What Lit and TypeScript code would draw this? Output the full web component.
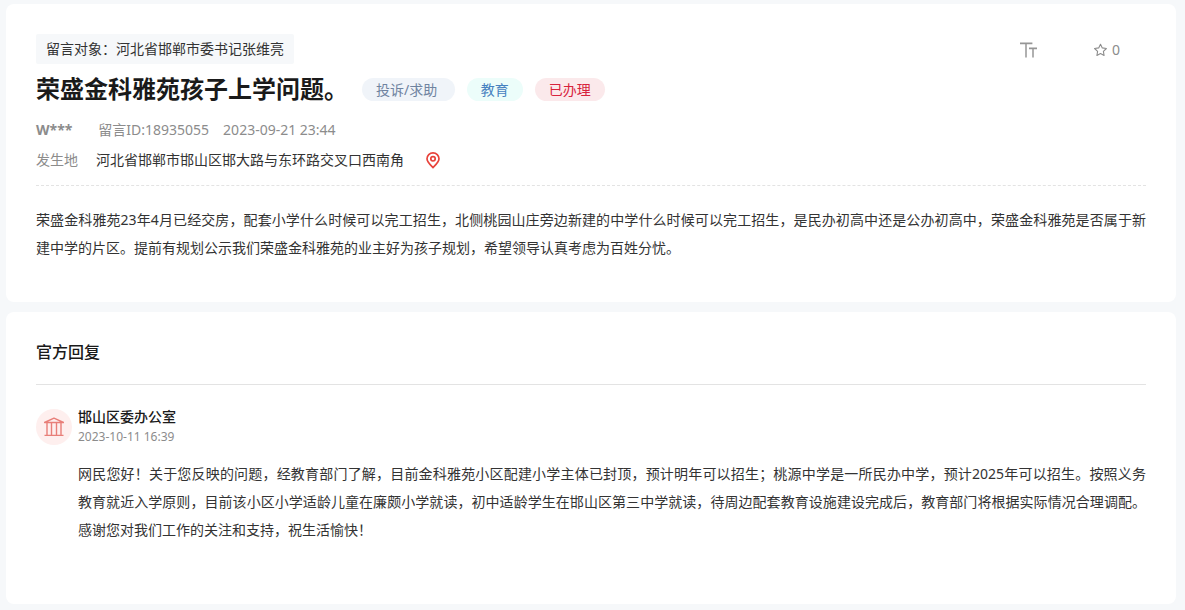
import { LitElement, html, css, svg } from "lit";
import { customElement } from "lit/decorators.js";

const textSizeIcon = svg`<svg width="18" height="16" viewBox="0 0 18 16" aria-hidden="true" fill="none" stroke="#969696">
  <path stroke-width="1.8" d="M0 1.4H12.4M9 6.4H17" />
  <path stroke-width="1.5" d="M6 1.4V15.5M13 6.4V15.5" /></svg>`;

const starIcon = svg`<svg width="14" height="14" viewBox="0 0 14 14" aria-hidden="true" fill="none" stroke="#8c8c8c" stroke-width="1.1" stroke-linejoin="round">
  <path d="M6.5 1.2L8.3 4.9L12.4 5.5L9.4 8.4L10.1 12.5L6.5 10.6L2.9 12.5L3.6 8.4L0.6 5.5L4.7 4.9Z" /></svg>`;

const pinIcon = svg`<svg width="14" height="17" viewBox="0 0 14 17" aria-hidden="true" fill="none" stroke="#e8433b" stroke-width="1.7">
  <path d="M7 15.6C4 12.6 1 10 1 6.8A6 5.9 0 0 1 13 6.8C13 10 10 12.6 7 15.6Z" stroke-linejoin="round" />
  <circle cx="7" cy="6.8" r="2.2" /></svg>`;

const officeIcon = svg`<svg width="20" height="20" viewBox="0 0 20 20" aria-hidden="true" fill="none" stroke="#e87f79" stroke-width="1.4">
  <path d="M0.5 5.5L10 1.2L19.5 5.5ZM0.5 18.4H19.5M3 5.5V18.4M7.5 5.5V18.4M12.5 5.5V18.4M17 5.5V18.4" stroke-linejoin="round" /></svg>`;

@customElement("app-root")
export class AppRoot extends LitElement {
  static styles = css`
    :host {
      display: flex;
      flex-direction: column;
      gap: 10px;
      box-sizing: border-box;
      min-height: 100vh;
      padding: 4px 9px 6px 6px;
      background: #f6f8fa;
      color: #333;
      font: 14px/20px "Noto Sans", "Noto Sans CJK SC", sans-serif;
    }
    .card {
      padding: 30px;
      border-radius: 8px;
      background: #fff;
    }
    .top {
      display: flex;
      justify-content: space-between;
      align-items: flex-end;
    }
    .target {
      padding: 5px 10px;
      border-radius: 2px;
      background: #f6f8fa;
    }
    .actions {
      display: flex;
      gap: 56px;
      padding: 0 26px 4px 0;
    }
    .action {
      display: flex;
      align-items: center;
      gap: 4px;
      padding: 0;
      border: 0;
      background: none;
      color: #8c8c8c;
      font: inherit;
      cursor: pointer;
    }
    .heading {
      display: flex;
      align-items: center;
      gap: 12px;
      padding: 8px 0 14px;
    }
    .title {
      margin: 0 2px 0 0;
      color: #1a1a1a;
      font-size: 24px;
      line-height: 34px;
      font-weight: 700;
    }
    .pill {
      padding: 0 14px;
      border-radius: 12px;
      line-height: 23px;
    }
    .kind { background: #f0f4f9; color: #6f83a0; }
    .topic { background: #ecfdfa; color: #4681c0; }
    .done { background: #fbe9eb; color: #d8233c; }
    .meta {
      display: flex;
      gap: 14px;
      color: #8c8c8c;
      line-height: 20px;
    }
    .author { margin-right: 12px; }
    .place {
      display: flex;
      align-items: center;
      gap: 18px;
      padding: 10px 0 15px;
      border-bottom: 1px dashed #e3e3e3;
    }
    .label { color: #8c8c8c; }
    .pin {
      display: flex;
      margin-left: 4px;
    }
    .text {
      margin: 0;
      line-height: 28px;
      text-align: justify;
    }
    .message { padding: 20px 0 10px; }
    .section {
      margin: 0;
      padding-bottom: 22px;
      border-bottom: 1px solid #e3e3e3;
      color: #1a1a1a;
      font-size: 16px;
      font-weight: 500;
    }
    .reply {
      display: grid;
      grid-template-columns: 36px 1fr;
      column-gap: 6px;
      align-items: center;
      padding: 22px 0 30px;
    }
    .avatar {
      display: grid;
      place-items: center;
      height: 36px;
      border-radius: 50%;
      background: #feefee;
    }
    .office {
      margin: 0;
      color: #1a1a1a;
      font-size: 14px;
      font-weight: 500;
    }
    .time {
      display: block;
      color: #8c8c8c;
      font-size: 12px;
    }
    .answer {
      grid-column: 2;
      padding-top: 13px;
    }
  `;

  render() {
    return html`
      <article class="card">
        <div class="top">
          <span class="target">留言对象：河北省邯郸市委书记张维亮</span>
          <div class="actions">
            <button class="action" type="button" aria-label="字号">${textSizeIcon}</button>
            <button class="action" type="button" aria-label="收藏 0">${starIcon}<span>0</span></button>
          </div>
        </div>
        <div class="heading">
          <h1 class="title">荣盛金科雅苑孩子上学问题。</h1>
          <span class="pill kind">投诉/求助&nbsp;</span>
          <span class="pill topic">教育</span>
          <span class="pill done">已办理</span>
        </div>
        <div class="meta">
          <b class="author">W***</b>
          <span>留言ID:18935055</span>
          <time>2023-09-21 23:44</time>
        </div>
        <div class="place">
          <span class="label">发生地</span>
          <span>河北省邯郸市邯山区邯大路与东环路交叉口西南角</span>
          <span class="pin">${pinIcon}</span>
        </div>
        <p class="text message">荣盛金科雅苑23年4月已经交房，配套小学什么时候可以完工招生，北侧桃园山庄旁边新建的中学什么时候可以完工招生，是民办初高中还是公办初高中，荣盛金科雅苑是否属于新建中学的片区。提前有规划公示我们荣盛金科雅苑的业主好为孩子规划，希望领导认真考虑为百姓分忧。</p>
      </article>
      <section class="card">
        <h2 class="section">官方回复</h2>
        <div class="reply">
          <span class="avatar">${officeIcon}</span>
          <div>
            <h3 class="office">邯山区委办公室</h3>
            <time class="time">2023-10-11 16:39</time>
          </div>
          <p class="text answer">网民您好！关于您反映的问题，经教育部门了解，目前金科雅苑小区配建小学主体已封顶，预计明年可以招生；桃源中学是一所民办中学，预计2025年可以招生。按照义务教育就近入学原则，目前该小区小学适龄儿童在廉颇小学就读，初中适龄学生在邯山区第三中学就读，待周边配套教育设施建设完成后，教育部门将根据实际情况合理调配。感谢您对我们工作的关注和支持，祝生活愉快！</p>
        </div>
      </section>
    `;
  }
}
